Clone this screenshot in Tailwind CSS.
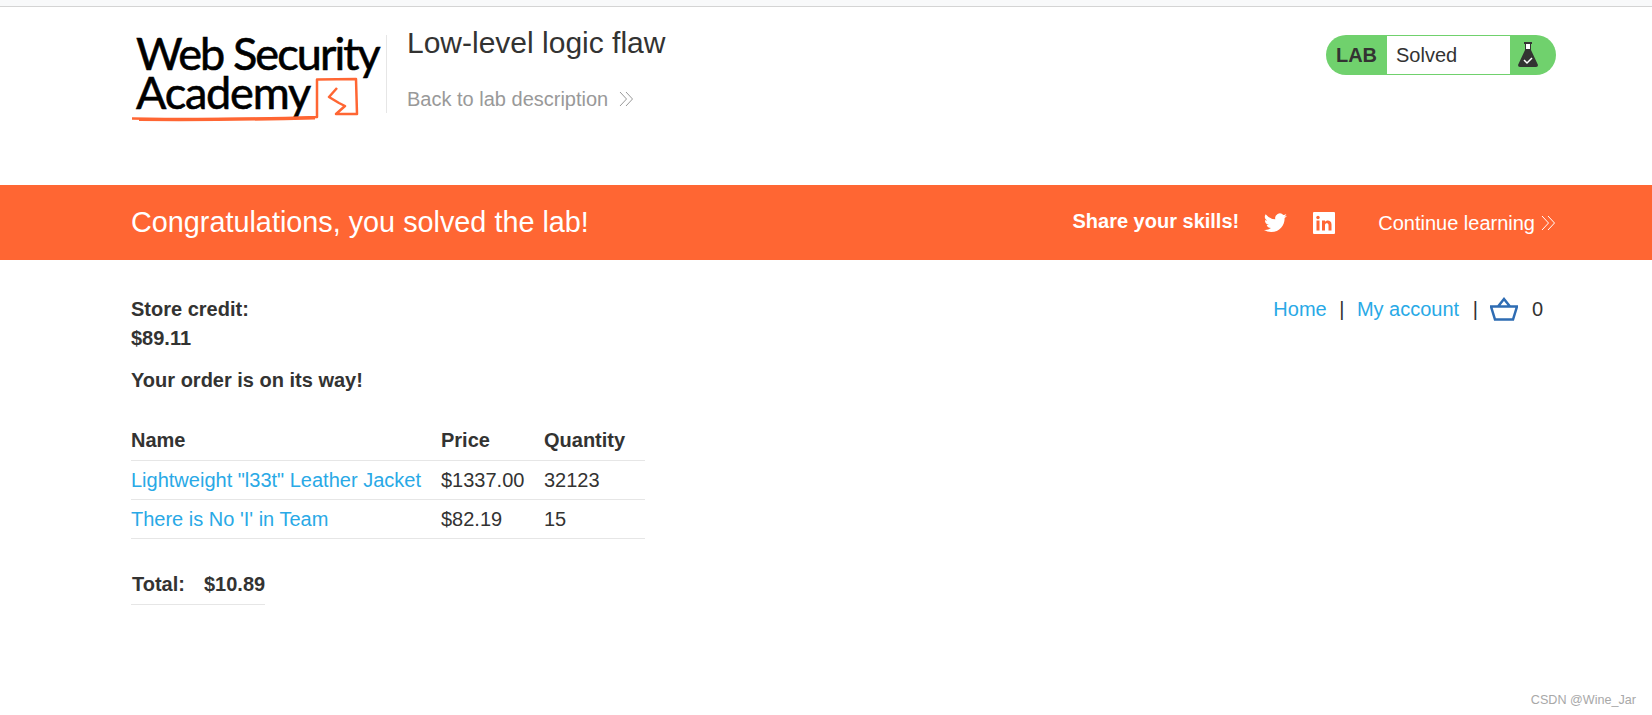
<!DOCTYPE html>
<html lang="en">
<head>
  <meta charset="UTF-8" />
  <title>Low-level logic flaw</title>
  <script src="https://cdn.jsdelivr.net/npm/@tailwindcss/browser@4"></script>
</head>
<body class="bg-white text-[#333332] font-['Liberation_Sans',Arial,sans-serif] h-[715px] overflow-hidden relative">

  <!-- Browser edge -->
  <div class="h-[7px] bg-[#f8f9fa] border-b border-[#d4d4d4]"></div>

  <!-- Header -->
  <header class="h-[178px] pl-[131px] pr-[96px] flex items-start justify-between">
    <div class="flex pt-[30px]">
      <!-- Logo -->
      <div class="relative w-[255px] h-[78px] shrink-0">
        <div class="-mt-[3px] pl-[5px] font-['Lato',sans-serif] text-black text-[45px] leading-[39px] tracking-[-1.9px] [-webkit-text-stroke:0.6px_black]">
          <div class="whitespace-nowrap">Web Security</div>
          <div class="whitespace-nowrap tracking-[-1.2px]">Academy</div>
        </div>
        <svg class="absolute left-0 top-[37px]" width="235" height="50" viewBox="0 0 235 50" fill="none" stroke="#ff6633" stroke-width="2.500" stroke-linejoin="round">
          <path d="M1 44.500 C60 45.500 130 45 186 43 L186 5.500 L225 5 L226 40 L205 40 L214 32 L208 29 L198 23 L206 14" />
          <path d="M8 45.500 C70 46 120 45.500 184 44" stroke-width="3" />
        </svg>
      </div>
      <!-- Title -->
      <div class="h-[78px] -mt-[2px] pl-[20px] border-l border-[#e6e6e6]">
        <h2 class="-mt-[10px] text-[30px] leading-[36px] text-[#333332] whitespace-nowrap">Low-level logic flaw</h2>
        <a href="#" class="mt-[26px] flex items-center text-[20px] leading-[24px] text-[#999999] whitespace-nowrap">
          Back to lab description
          <svg class="ml-[11px]" width="15" height="16" viewBox="0 0 15 16" fill="none" stroke="#999999" stroke-width="1">
            <path d="M1 1 L7.500 8 L1 15 M7 1 L13.500 8 L7 15" />
          </svg>
        </a>
      </div>
    </div>

    <!-- Lab status -->
    <div class="mt-[28px] w-[230px] h-[40px] rounded-[20px] bg-[#70d16d] flex items-stretch overflow-hidden">
      <div class="w-[61px] flex items-center justify-center text-[20px] font-bold text-[#333332]">LAB</div>
      <div class="my-[1px] w-[123px] bg-white flex items-center pl-[9px] text-[20px]">Solved</div>
      <div class="flex-1 flex items-center justify-start pl-[8px]">
        <svg width="20" height="28" viewBox="0 0 20 28">
          <path d="M6 1 H14 V3 H13 V9 L20 24 Q20 26 18 26 H2 Q0 26 0 24 L7 9 V3 H6 Z" fill="#333332" />
          <path d="M8 3 H12 V8 H8 Z" fill="#ffffff" />
          <path d="M6 19 L9 22 L14 17" fill="none" stroke="#ffffff" stroke-width="1.500" />
        </svg>
      </div>
    </div>
  </header>

  <!-- Solved banner -->
  <section class="h-[75px] bg-[#ff6633] pl-[131px] pr-[96px] flex items-center text-white">
    <h4 class="text-[28.800px] whitespace-nowrap">Congratulations, you solved the lab!</h4>
    <div class="ml-auto flex items-center">
      <span class="text-[20px] font-bold mr-[25px] whitespace-nowrap -mt-[3px]">Share your skills!</span>
      <svg class="mr-[26px]" width="23" height="20" viewBox="0 0 24 20" fill="#ffffff">
        <path d="M24 2.400a9.800 9.800 0 0 1-2.800.8A4.900 4.900 0 0 0 23.300.5a9.800 9.800 0 0 1-3.100 1.200A4.900 4.900 0 0 0 11.800 6.200 14 14 0 0 1 1.700.9a4.900 4.900 0 0 0 1.500 6.600 4.900 4.900 0 0 1-2.200-.6v.1a4.900 4.900 0 0 0 3.900 4.800 4.900 4.900 0 0 1-2.200.1 4.900 4.900 0 0 0 4.600 3.400A9.900 9.900 0 0 1 0 17.300 14 14 0 0 0 7.500 19.500c9 0 14-7.500 14-14v-.6A10 10 0 0 0 24 2.400z" />
      </svg>
      <svg class="mr-[43px]" width="22" height="22" viewBox="0 0 22 22">
        <rect width="22" height="22" rx="1" fill="#ffffff" />
        <rect x="3.500" y="8.500" width="3" height="10" fill="#ff6633" />
        <circle cx="5" cy="5.500" r="1.700" fill="#ff6633" />
        <path d="M9 8.500 H12 V10 C13 8 18.500 7.500 18.500 12.500 V18.500 H15.500 V13 C15.500 10.500 12 10.500 12 13 V18.500 H9 Z" fill="#ff6633" />
      </svg>
      <a href="#" class="flex items-center text-[20px] font-normal whitespace-nowrap">
        Continue learning
        <svg class="ml-[6px]" width="15" height="16" viewBox="0 0 15 16" fill="none" stroke="#ffffff" stroke-width="1">
          <path d="M1 1 L7.500 8 L1 15 M7 1 L13.500 8 L7 15" />
        </svg>
      </a>
    </div>
  </section>

  <!-- Content -->
  <main class="pl-[131px] pr-[96px] pt-[35px] flex justify-between items-start">
    <div>
      <p class="font-bold text-[20px] leading-[29px]">Store credit:<br />$89.11</p>
      <p class="font-bold text-[20px] leading-[24px] mt-[15px]">Your order is on its way!</p>

      <table class="mt-[29px] w-[514px] text-[20px] border-collapse">
        <thead>
          <tr class="border-b border-[#e6e6e6] h-[39px] text-left">
            <th class="font-bold w-[310px]">Name</th>
            <th class="font-bold w-[103px]">Price</th>
            <th class="font-bold">Quantity</th>
          </tr>
        </thead>
        <tbody>
          <tr class="border-b border-[#e6e6e6] h-[39px]">
            <td class="text-[#29a9e6]">Lightweight "l33t" Leather Jacket</td>
            <td>$1337.00</td>
            <td>32123</td>
          </tr>
          <tr class="border-b border-[#e6e6e6] h-[39px]">
            <td class="text-[#29a9e6]">There is No 'I' in Team</td>
            <td>$82.19</td>
            <td>15</td>
          </tr>
        </tbody>
      </table>

      <div class="mt-[25px] w-[134px] h-[41px] border-b border-[#e6e6e6] flex items-center font-bold text-[20px] pl-[1px]">
        <span>Total:</span>
        <span class="ml-[19px]">$10.89</span>
      </div>
    </div>

    <nav class="flex items-center text-[20px] mr-[13px] mt-[-1px]">
      <a href="#" class="text-[#29a9e6]">Home</a>
      <span class="mx-[12.500px]">|</span>
      <a href="#" class="text-[#29a9e6]">My account</a>
      <span class="ml-[13.500px] mr-[12px]">|</span>
      <svg width="28" height="24" viewBox="0 0 28 24" fill="none" stroke="#2e6cb3" stroke-width="2.500">
        <path d="M1 9.500 H27 L23 22.500 H5 Z M8 9.500 L14 2 L20 9.500" />
      </svg>
      <span class="ml-[14px]">0</span>
    </nav>
  </main>

  <div class="absolute right-[16px] bottom-[5px] text-[12.600px] text-[#a8a8a8]">CSDN @Wine_Jar</div>
</body>
</html>
